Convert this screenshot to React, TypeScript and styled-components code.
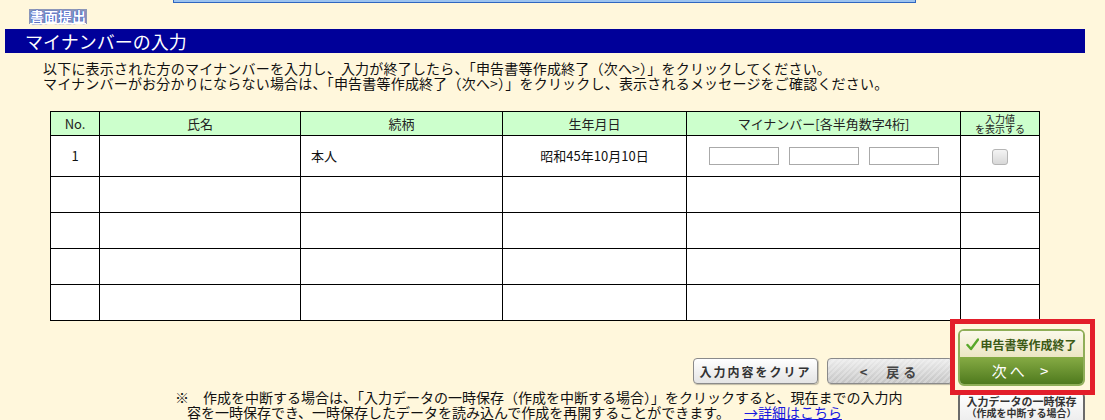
import styled, { createGlobalStyle } from "styled-components";

const GlobalStyle = createGlobalStyle`
  html, body {
    margin: 0;
    padding: 0;
    background: #fff7dc;
  }
  body {
    font-family: "Noto Sans CJK JP", "Noto Sans", sans-serif;
    color: #000;
    overflow: hidden;
  }
`;

const Page = styled.div`
  width: 1105px;
  height: 420px;
  overflow: hidden;
  position: relative;
`;

const TopStrip = styled.div`
  margin-left: 173px;
  width: 741px;
  height: 2px;
  background: #9cc3f0;
  border: 1px solid #2f66c0;
  border-top: none;
`;

const Content = styled.div`
  padding-left: 5px;
`;

const DocLink = styled.a`
  display: block;
  width: fit-content;
  margin: 6px 0 0 24px;
  padding: 0 1px;
  height: 15px;
  line-height: 15px;
  font-size: 14px;
  font-weight: 700;
  color: #fff;
  background: #8d97b8;
  text-decoration: underline;
  text-shadow: 0 0 1px #1b3fd0, 0 0 1px #1b3fd0;
`;

const TitleBar = styled.div`
  margin-top: 5px;
  width: 1080px;
  height: 24px;
  background: #000099;
  color: #fff;
  font-size: 18px;
  line-height: 24px;
  padding-left: 20px;
  box-sizing: border-box;
`;

const Instructions = styled.div`
  margin-top: 8px;
  padding-left: 38px;
  font-size: 14px;
  line-height: 15px;
  letter-spacing: 0.2px;
  color: #111;
`;

const Table = styled.table`
  margin: 20px 0 0 45px;
  border-collapse: collapse;
  background: #fff;
  table-layout: fixed;
  font-size: 13px;
`;

const HeadCell = styled.th<{ $w: number }>`
  width: ${({ $w }) => $w}px;
  height: 23px;
  padding: 0;
  border: 1px solid #000;
  background: #ccffcc;
  font-weight: 400;
  line-height: 14px;
  color: #222;
`;

const SmallHead = styled.span`
  display: block;
  font-size: 10px;
  line-height: 10px;
`;

const Cell = styled.td<{ $align?: string; $h: number }>`
  height: ${({ $h }) => $h}px;
  padding: 0 ${({ $align }) => ($align === "left" ? "10px" : "0")};
  border: 1px solid #000;
  text-align: ${({ $align }) => $align || "center"};
  line-height: 16px;
  color: #111;
`;

const NumberInputs = styled.div`
  display: flex;
  justify-content: center;
  gap: 10px;
`;

const NumberBox = styled.input`
  width: 70px;
  height: 18px;
  box-sizing: border-box;
  border: 1px solid #aaa;
  margin: 0;
  padding: 0 3px;
  background: #fff;
`;

const FakeCheck = styled.span`
  display: inline-block;
  width: 16px;
  height: 16px;
  box-sizing: border-box;
  border: 1px solid #b5b5b5;
  border-radius: 3px;
  background: linear-gradient(#f4f4f4, #d8d8d8);
  vertical-align: middle;
`;

const Footer = styled.div`
  display: grid;
  grid-template-columns: 953px 127px;
  column-gap: 5px;
  margin-top: 8px;
`;

const ButtonRow = styled.div`
  display: flex;
  justify-content: flex-end;
  align-items: flex-end;
  gap: 9px;
  padding-bottom: 2px;
`;

const ClearButton = styled.button`
  width: 125px;
  height: 26px;
  padding: 0;
  border: 1px solid #8a8a8a;
  border-radius: 4px;
  background: linear-gradient(#ffffff, #e4e4e4);
  box-shadow: 1px 1px 1px rgba(0, 0, 0, 0.25);
  font-family: inherit;
  font-size: 12px;
  font-weight: 700;
  letter-spacing: 2px;
  color: #333;
`;

const BackButton = styled.button`
  width: 126px;
  height: 26px;
  padding: 0;
  border: 1px solid #8a8a8a;
  border-radius: 4px;
  background: repeating-linear-gradient(135deg, rgba(255, 255, 255, 0.25) 0 2px, transparent 2px 4px),
    linear-gradient(#ececec, #c4c4c4);
  box-shadow: 1px 1px 1px rgba(0, 0, 0, 0.25);
  font-family: inherit;
  font-size: 13px;
  font-weight: 700;
  letter-spacing: 4px;
  color: #444;
  word-spacing: 8px;
`;

const MainWrap = styled.div`
  position: relative;
  z-index: 2;
`;

const Highlight = styled.div`
  position: absolute;
  left: -8px;
  right: -10px;
  top: -10px;
  bottom: -9px;
  border: 5px solid #e31e2a;
  pointer-events: none;
`;

const MainButton = styled.button`
  display: flex;
  flex-direction: column;
  width: 127px;
  height: 57px;
  padding: 0;
  border: 2px solid #8fae58;
  border-radius: 6px;
  overflow: hidden;
  background: #fff;
  font-family: inherit;
`;

const MainTop = styled.span`
  display: flex;
  align-items: center;
  justify-content: center;
  gap: 1px;
  height: 26px;
  width: 100%;
  background: linear-gradient(#fbf9ea, #ece6c4);
  color: #3c5a16;
  font-size: 12px;
  font-weight: 700;
`;

const MainBottom = styled.span`
  display: flex;
  align-items: center;
  justify-content: center;
  flex: 1;
  width: 100%;
  background: linear-gradient(#86ab44, #4f7a1e);
  color: #fff;
  font-size: 15px;
  letter-spacing: 3px;
  word-spacing: 6px;
`;

const Note = styled.div`
  padding-left: 187px;
  text-indent: -12px;
  margin-top: 4px;
  font-size: 14px;
  line-height: 15px;
  color: #111;
`;

const DetailLink = styled.a`
  margin-left: 14px;
  color: #1a1ae0;
  text-decoration: underline;
`;

const SaveButton = styled.button`
  margin-top: 5px;
  width: 127px;
  height: 34px;
  padding: 3px 0 0;
  border: 2px solid #6a6a6a;
  border-radius: 6px;
  background: linear-gradient(#ffffff, #ececec);
  font-family: inherit;
  font-weight: 700;
  color: #333;
  line-height: 11px;
  display: flex;
  flex-direction: column;
  align-items: center;
  justify-content: flex-start;
`;

const SaveLine = styled.span<{ $size: number }>`
  font-size: ${({ $size }) => $size}px;
  line-height: 11px;
`;

const CheckIcon = () => (
  <svg width="13" height="13" viewBox="0 0 13 13">
    <path d="M1.5 7 L5 11 L12 1.5" fill="none" stroke="#58a82a" strokeWidth="2.4" strokeLinecap="round" strokeLinejoin="round" />
  </svg>
);

const columns = [
  { w: 48, label: "No." },
  { w: 200, label: "氏名" },
  { w: 201, label: "続柄" },
  { w: 183, label: "生年月日" },
  { w: 273, label: "マイナンバー[各半角数字4桁]" },
];

export default function App() {
  const emptyRows = [0, 1, 2, 3];
  return (
    <Page>
      <GlobalStyle />
      <TopStrip />
      <Content>
        <DocLink>書面提出</DocLink>
        <TitleBar>マイナンバーの入力</TitleBar>
        <Instructions>
          以下に表示された方のマイナンバーを入力し、入力が終了したら、「申告書等作成終了（次へ&gt;）」をクリックしてください。
          <br />
          マイナンバーがお分かりにならない場合は、「申告書等作成終了（次へ&gt;）」をクリックし、表示されるメッセージをご確認ください。
        </Instructions>
        <Table>
          <thead>
            <tr>
              {columns.map((c) => (
                <HeadCell key={c.label} $w={c.w}>
                  {c.label}
                </HeadCell>
              ))}
              <HeadCell $w={78}>
                <SmallHead>入力値</SmallHead>
                <SmallHead>を表示する</SmallHead>
              </HeadCell>
            </tr>
          </thead>
          <tbody>
            <tr>
              <Cell $h={40}>1</Cell>
              <Cell $h={40} />
              <Cell $h={40} $align="left">
                本人
              </Cell>
              <Cell $h={40}>昭和45年10月10日</Cell>
              <Cell $h={40}>
                <NumberInputs>
                  <NumberBox />
                  <NumberBox />
                  <NumberBox />
                </NumberInputs>
              </Cell>
              <Cell $h={40}>
                <FakeCheck />
              </Cell>
            </tr>
            {emptyRows.map((r) => (
              <tr key={r}>
                {[0, 1, 2, 3, 4, 5].map((c) => (
                  <Cell key={c} $h={35} />
                ))}
              </tr>
            ))}
          </tbody>
        </Table>
      </Content>
      <Footer>
        <ButtonRow>
          <ClearButton>入力内容をクリア</ClearButton>
          <BackButton>&lt; 戻る</BackButton>
        </ButtonRow>
        <MainWrap>
          <MainButton>
            <MainTop>
              <CheckIcon />
              申告書等作成終了
            </MainTop>
            <MainBottom>次へ &gt;</MainBottom>
          </MainButton>
          <Highlight />
        </MainWrap>
        <Note>
          ※　作成を中断する場合は、「入力データの一時保存（作成を中断する場合）」をクリックすると、現在までの入力内
          <br />
          容を一時保存でき、一時保存したデータを読み込んで作成を再開することができます。
          <DetailLink>→詳細はこちら</DetailLink>
        </Note>
        <SaveButton>
          <SaveLine $size={11}>入力データの一時保存</SaveLine>
          <SaveLine $size={10}>（作成を中断する場合）</SaveLine>
        </SaveButton>
      </Footer>
    </Page>
  );
}
